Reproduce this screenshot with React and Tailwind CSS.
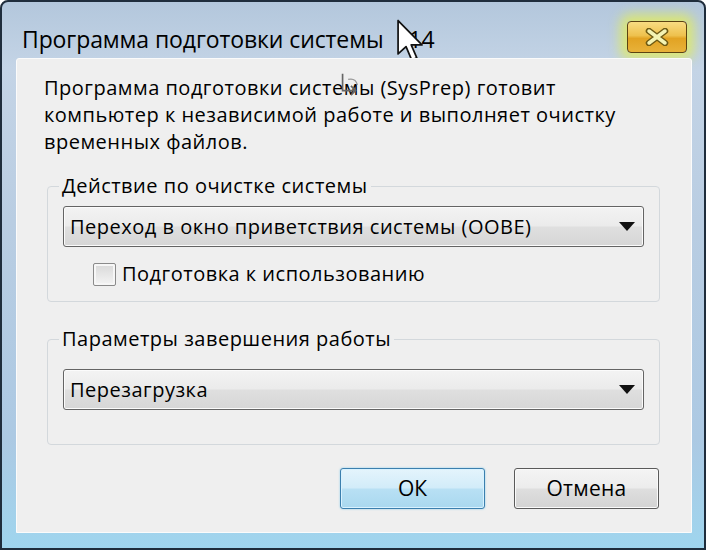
export default function App() {
  return (
    <div className="relative h-[550px] w-[706px] overflow-hidden rounded-t-[8px] border-2 border-[#1f2d3c] bg-[linear-gradient(to_bottom,#b3c7dc_0%,#c4d4e6_12%,#b9cde2_40%,#acc9e3_80%,#9fd5ee_100%)] font-['Open_Sans','Noto_Sans',sans-serif] text-black">
      {/* Title bar */}
      <div className="flex h-[56px] items-start justify-between pl-[20px] pr-[17px]">
        <span className="mt-[23px] text-[23px] leading-[28px] tracking-[-0.1px]">
          Программа подготовки системы<span className="ml-[25px]">14</span>
        </span>
        <button className="mt-[19px] flex h-[32px] w-[60px] items-center justify-center rounded-[4px] border border-[#5c4312] bg-[linear-gradient(to_bottom,#f8dc82_0%,#eec14e_45%,#e2a323_55%,#e8b23a_100%)] shadow-[0_0_12px_7px_rgba(226,236,90,0.8)]">
          <svg width="26" height="18" viewBox="0 0 26 18">
            <path d="M5 3 L21 15 M21 3 L5 15" stroke="#6d5a14" strokeWidth="6.5" strokeLinecap="round" />
            <path d="M5 3 L21 15 M21 3 L5 15" stroke="#f4f3b2" strokeWidth="3.5" strokeLinecap="round" />
          </svg>
        </button>
      </div>

      {/* Mouse cursor over the title */}
      <svg className="absolute left-[395px] top-[17px]" width="28" height="44" viewBox="0 0 13 20">
        <path d="M0.5 0.5 L0.5 16 L4.2 12.6 L6.8 18.8 L9.2 17.8 L6.6 11.8 L11.6 11.8 Z" fill="#fff" stroke="#111" strokeWidth="0.8" strokeLinejoin="round" />
      </svg>

      {/* Client area */}
      <div className="relative ml-[14px] h-[475px] w-[676px] rounded-t-[3px] border border-[#fbfbfb] bg-[#efefef]">
        <p className="pl-[27px] pt-[15px] text-[20px] leading-[27px] tracking-[0.5px]">
          Программа подготовки системы (SysPrep) готовит
          <br />
          компьютер к независимой работе и выполняет очистку
          <br />
          временных файлов.
        </p>

        {/* faint cursor ghost in the text */}
        <svg className="absolute left-[320px] top-[13px]" width="26" height="26" viewBox="0 0 28 28">
          <path d="M6 2 L6 20 L20 20 M15 15 L20 20 L15 25" stroke="#666" strokeWidth="1.8" fill="none" />
          <path d="M12 8 Q20 6 22 14" stroke="#999" strokeWidth="1.4" fill="none" />
        </svg>

        <fieldset className="ml-[30px] mt-[19px] w-[613px] rounded-[4px] border border-[#d3d8dc] px-[15px] pb-[15px] pt-0">
          <legend className="-ml-[4px] px-[3px] text-[20px] leading-[24px] tracking-[0.5px]">Действие по очистке системы</legend>
          <Combo>Переход в окно приветствия системы (OOBE)</Combo>
          <div className="mt-[15px] flex items-center pl-[30px]">
            <div className="h-[23px] w-[23px] rounded-[2px] border border-[#8a8a8a] bg-[linear-gradient(to_bottom,#d8d8d8,#f4f4f4)] shadow-[inset_0_0_0_2px_#f6f6f6]" />
            <span className="ml-[6px] text-[20px] leading-[24px] tracking-[0.5px]">Подготовка к использованию</span>
          </div>
        </fieldset>

        <fieldset className="ml-[30px] mt-[25px] w-[613px] rounded-[4px] border border-[#d3d8dc] px-[15px] pb-[34px] pt-0">
          <legend className="-ml-[4px] px-[3px] text-[20px] leading-[24px] tracking-[0.5px]">Параметры завершения работы</legend>
          <div className="mt-[18px]">
            <Combo>Перезагрузка</Combo>
          </div>
        </fieldset>

        <div className="mr-[32px] mt-[23px] flex justify-end gap-[29px]">
          <button className="h-[41px] w-[145px] rounded-[3px] border border-[#3b7fae] bg-[linear-gradient(to_bottom,#e4f4fc_0%,#d2ecf9_48%,#b8e0f4_52%,#a9d8ef_100%)] text-[21px] leading-none shadow-[inset_0_0_0_1px_#d8f2ff,0_0_2px_#7fc8ea]">
            ОК
          </button>
          <button className="h-[41px] w-[145px] rounded-[3px] border border-[#5a5a5a] bg-[linear-gradient(to_bottom,#f4f4f4_0%,#ececec_48%,#dedede_52%,#d3d3d3_100%)] text-[21px] leading-none tracking-[0.3px] shadow-[inset_0_0_0_1px_#fafafa]">
            Отмена
          </button>
        </div>
      </div>
    </div>
  );
}

function Combo({ children }) {
  return (
    <div className="mt-[8px] flex h-[41px] items-center justify-between rounded-[3px] border border-[#646464] bg-[linear-gradient(to_bottom,#f3f3f3_0%,#ebebeb_48%,#dfdfdf_52%,#d6d6d6_100%)] pl-[6px] pr-[8px] shadow-[inset_0_0_0_1px_#fbfbfb]">
      <span className="text-[20px] leading-[24px] tracking-[0.5px]">{children}</span>
      <svg width="16" height="9" viewBox="0 0 16 9">
        <path d="M0 0 H16 L8 9 Z" fill="#111" />
      </svg>
    </div>
  );
}
